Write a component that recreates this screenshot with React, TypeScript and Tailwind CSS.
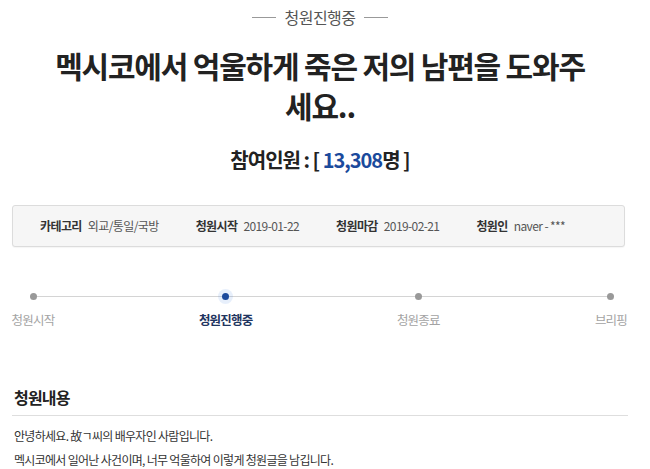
const steps = [
  { label: "청원시작", active: false },
  { label: "청원진행중", active: true },
  { label: "청원종료", active: false },
  { label: "브리핑", active: false },
];

const info = [
  { k: "카테고리", v: "외교/통일/국방" },
  { k: "청원시작", v: "2019-01-22" },
  { k: "청원마감", v: "2019-02-21" },
  { k: "청원인", v: "naver - ***" },
];

export default function App() {
  return (
    <div className="h-[469px] w-[650px] overflow-hidden bg-white font-['Noto_Sans_CJK_KR',sans-serif] text-[#222]">
      <div className="ml-[12px] w-[616px]">
        {/* status */}
        <div className="flex items-center justify-center gap-[8px] pt-[7px] text-[16px] leading-[20px] tracking-[-0.5px] text-[#555]">
          <span className="h-px w-[24px] bg-[#999]" />
          <span>청원진행중</span>
          <span className="h-px w-[24px] bg-[#999]" />
        </div>

        <h1 className="mx-auto mt-[18px] text-center text-[30px] font-bold leading-[40px] tracking-[-1.2px] text-[#222]">
          멕시코에서 억울하게 죽은 저의 남편을 도와주
          <br />
          세요..
        </h1>

        <p className="mt-[21px] text-center text-[20px] font-bold leading-[28px] tracking-[-1px] text-[#222]">
          참여인원 : [ <span className="text-[#1b4a9c]">13,308</span>명 ]
        </p>

        {/* info box */}
        <div className="mt-[31px] flex w-[613px] items-center gap-[37px] rounded-[3px] border border-[#dcdcdc] bg-[#f6f6f6] py-[11px] pl-[27px] text-[12px] leading-[18px] tracking-[-0.6px] shadow-[0_1px_1px_rgba(0,0,0,0.04)]">
          {info.map((i) => (
            <div key={i.k} className="flex items-center gap-[6px]">
              <span className="font-bold text-[#333]">{i.k}</span>
              <span className="text-[#555]">{i.v}</span>
            </div>
          ))}
        </div>

        {/* progress */}
        <div className="relative mt-[46px] flex w-[620px] justify-between">
          <div className="absolute left-[21px] right-[21px] top-[3px] h-px bg-[#d4d4d4]" />
          {steps.map((s) => (
            <div key={s.label} className="relative flex w-[42px] flex-col items-center">
              <span
                className={
                  s.active
                    ? "h-[7px] w-[7px] rounded-full bg-[#1b4a9c] shadow-[0_0_0_4px_rgba(60,120,220,0.12)]"
                    : "h-[7px] w-[7px] rounded-full bg-[#999]"
                }
              />
              <span
                className={
                  s.active
                    ? "mt-[11px] whitespace-nowrap text-[12.5px] font-bold leading-[18px] tracking-[-0.8px] text-[#1f3560]"
                    : "mt-[11px] whitespace-nowrap text-[12.5px] leading-[18px] tracking-[-0.8px] text-[#a3a3a3]"
                }
              >
                {s.label}
              </span>
            </div>
          ))}
        </div>

        {/* content */}
        <h2 className="mt-[56px] border-b border-[#dedede] pb-[6px] pl-[2px] text-[16px] font-bold leading-[24px] tracking-[-0.8px] text-[#222]">
          청원내용
        </h2>
        <div className="mt-[8px] pl-[2px] text-[12px] leading-[24px] tracking-[-0.7px] text-[#333]">
          <p>안녕하세요. 故ㄱ씨의 배우자인 사람입니다.</p>
          <p>멕시코에서 일어난 사건이며, 너무 억울하여 이렇게 청원글을 남깁니다.</p>
        </div>
      </div>
    </div>
  );
}
